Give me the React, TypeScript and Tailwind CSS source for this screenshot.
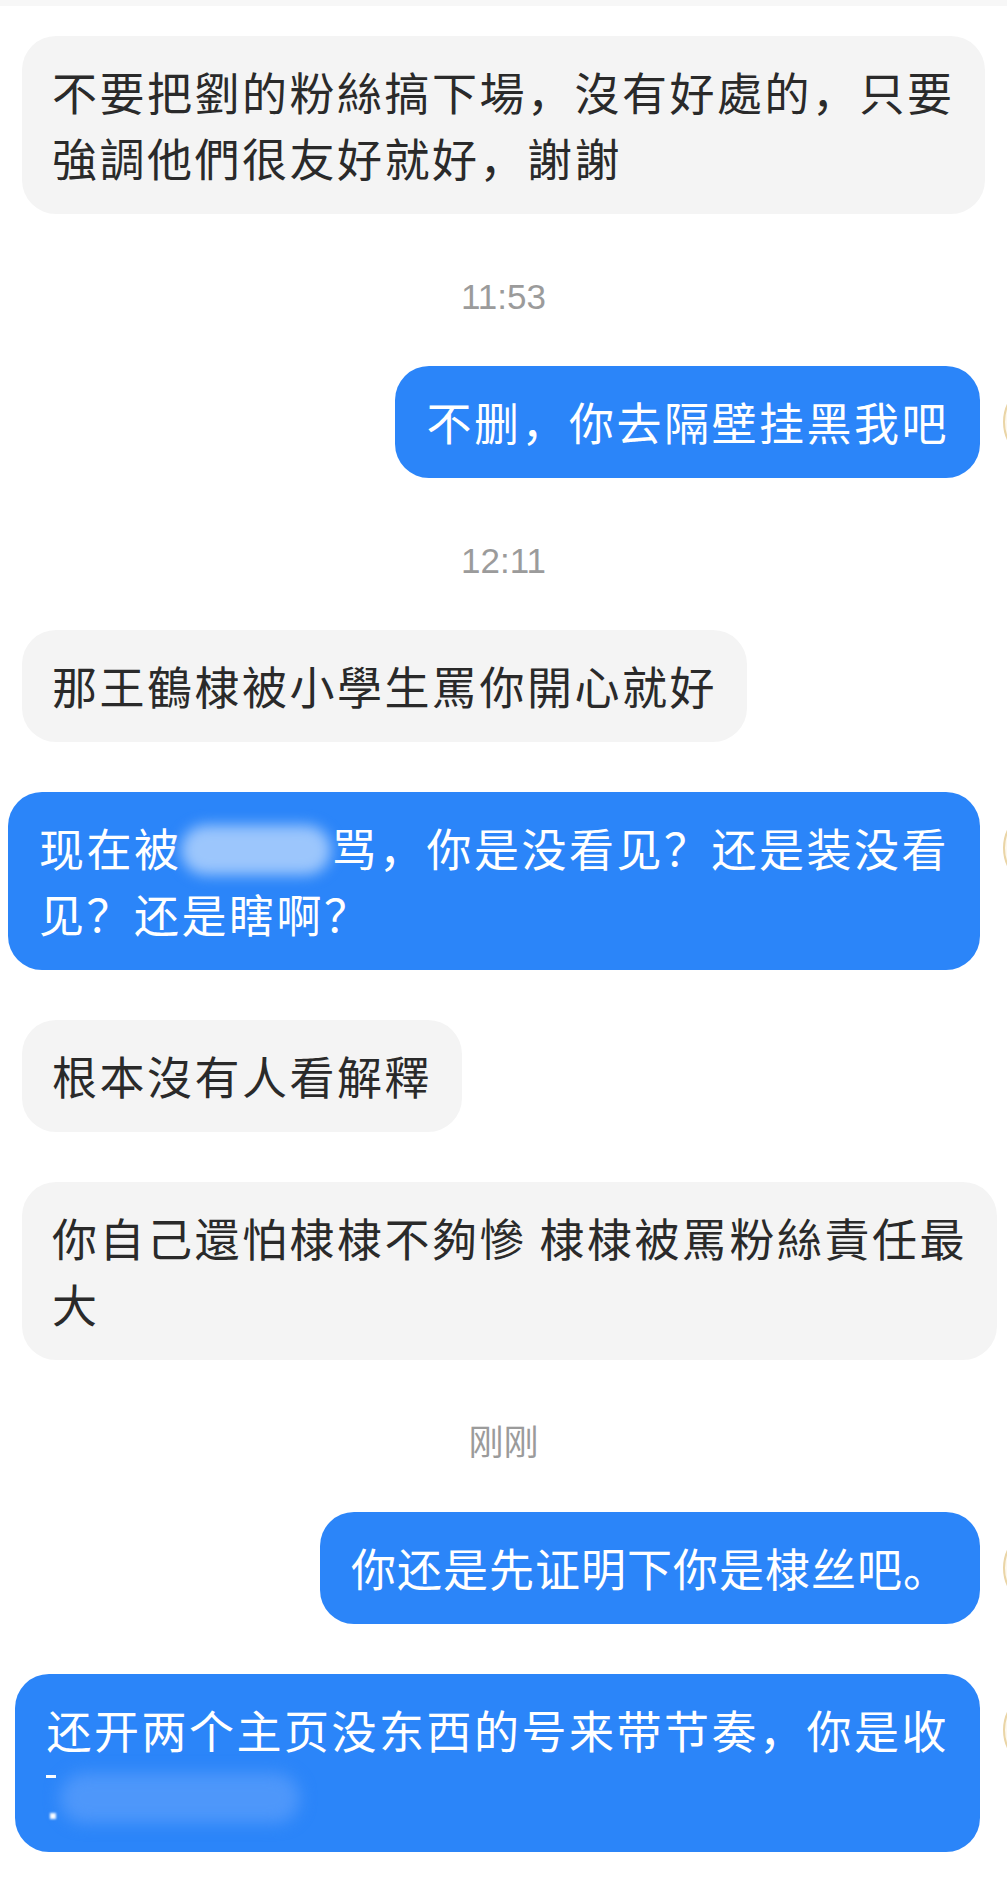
import React from 'react'

const cjk = { fontFamily: '"Noto Sans CJK SC", "Noto Sans CJK TC", sans-serif' }

function TimeLabel({ children }: { children: React.ReactNode }) {
  return (
    <div
      className="mt-[14px] h-[38px] text-center text-[35px] leading-[38px] text-[#9b9b9b]"
      style={{ fontFamily: '"Liberation Sans", "Noto Sans CJK SC", sans-serif' }}
    >
      {children}
    </div>
  )
}

function Gray({ children }: { children: React.ReactNode }) {
  return (
    <div className="flex pl-[22px]">
      <div
        className="rounded-[34px] bg-[#f4f4f4] px-[30px] py-[23px] text-[45px] leading-[66px] tracking-[2.5px] whitespace-nowrap text-[#2a2a2a]"
        style={cjk}
      >
        {children}
      </div>
    </div>
  )
}

function Blue({ children, tight }: { children: React.ReactNode; tight?: boolean }) {
  return (
    <div className="relative flex justify-end pr-[27px]">
      <div
        className={
          tight
            ? 'rounded-[34px] bg-[#2b85f9] px-[31px] py-[23px] text-[45px] leading-[66px] tracking-[1px] whitespace-nowrap text-white'
            : 'rounded-[34px] bg-[#2b85f9] px-[31px] py-[23px] text-[45px] leading-[66px] tracking-[2.5px] whitespace-nowrap text-white'
        }
        style={cjk}
      >
        {children}
      </div>
      {/* avatar peeking in from the right edge */}
      <span className="absolute top-[14px] left-[1003px] h-[84px] w-[84px] rounded-full border-2 border-[#ead5a6] bg-[#fdf8ee]" />
    </div>
  )
}

export default function App() {
  return (
    <div className="relative h-[1879px] w-[1007px] overflow-hidden bg-white">
      <div className="h-[6px] bg-[#f7f7f7]" />
      <div className="flex flex-col gap-[50px] pt-[30px]">
        <Gray>
          不要把劉的粉絲搞下場，沒有好處的，只要
          <br />
          強調他們很友好就好，謝謝
        </Gray>

        <TimeLabel>11:53</TimeLabel>

        <Blue>不删，你去隔壁挂黑我吧</Blue>

        <TimeLabel>12:11</TimeLabel>

        <Gray>那王鶴棣被小學生罵你開心就好</Gray>

        <Blue>
          现在被
          <span className="inline-block h-[50px] w-[150px] rounded-full bg-[#9cc6fc] align-[-8px] blur-[7px]" />
          骂，你是没看见？还是装没看
          <br />
          见？还是瞎啊？
        </Blue>

        <Gray>根本沒有人看解釋</Gray>

        <Gray>
          你自己還怕棣棣不夠慘 棣棣被罵粉絲責任最
          <br />
          大
        </Gray>

        <TimeLabel>刚刚</TimeLabel>

        <Blue tight>你还是先证明下你是棣丝吧。</Blue>

        <Blue>
          还开两个主页没东西的号来带节奏，你是收
          <br />
          <span className="relative inline-block h-[58px] w-[300px] align-[-12px]">
            <span className="absolute top-[6px] left-[0px] h-[3px] w-[10px] bg-white" />
            <span className="absolute top-[44px] left-[4px] h-[6px] w-[6px] bg-white blur-[1px]" />
            <span className="absolute top-[4px] left-[14px] h-[50px] w-[240px] rounded-full bg-[#4e97fa] blur-[8px]" />
          </span>
        </Blue>
      </div>
    </div>
  )
}
